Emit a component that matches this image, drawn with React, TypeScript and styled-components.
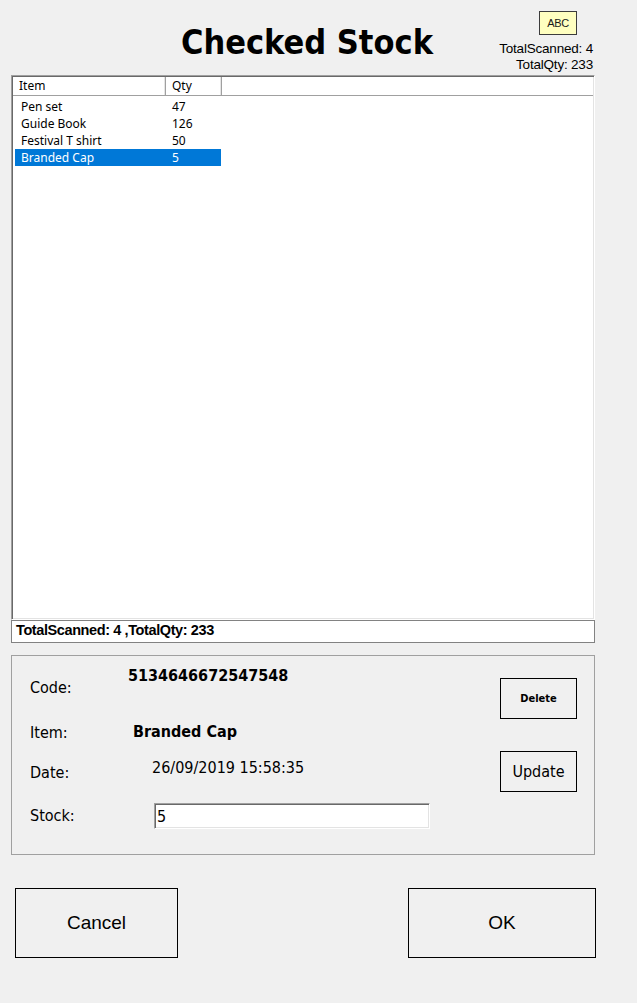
import React from "react";
import styled, { createGlobalStyle } from "styled-components";

const TAHOMA = `"DejaVu Sans Condensed", "Liberation Sans", sans-serif`;
const ARIAL = `"Liberation Sans", Arial, sans-serif`;
const SEGOE = `"Noto Sans", "Open Sans", sans-serif`;

const Global = createGlobalStyle`
  html, body { margin: 0; padding: 0; background: #f0f0f0; }
  body { width: 637px; height: 1003px; overflow: hidden; color: #000; }
  * { box-sizing: border-box; }
`;

const Page = styled.div`
  width: 637px;
  height: 1003px;
  display: flex;
  flex-direction: column;
  background: #f0f0f0;
`;

const Header = styled.header`
  height: 75px;
  display: flex;
  align-items: flex-start;
  padding-left: 181px;
  padding-right: 44px;
`;

const Title = styled.h1`
  margin: 25px 0 0 0;
  font-family: ${TAHOMA};
  font-weight: bold;
  font-size: 34px;
  line-height: 34px;
  color: #000;
  white-space: nowrap;
`;

const Stats = styled.div`
  margin-left: auto;
  padding-top: 11px;
  display: flex;
  flex-direction: column;
  align-items: flex-end;
`;

const Badge = styled.div`
  width: 38px;
  height: 24px;
  margin-right: 16px;
  margin-bottom: 6px;
  background: #ffffc0;
  border: 1px solid #3c3c3c;
  display: flex;
  align-items: center;
  justify-content: center;
  font-family: ${ARIAL};
  font-size: 11px;
  letter-spacing: -0.3px;
  color: #1a1a1a;
`;

const StatLine = styled.div`
  font-family: ${ARIAL};
  font-size: 13.5px;
  letter-spacing: -0.2px;
  line-height: 16px;
  color: #000;
  white-space: nowrap;
`;

const ListBox = styled.div`
  margin: 0 42px 0 11px;
  height: 545px;
  background: #fff;
  border-style: solid;
  border-width: 1px;
  border-color: #a0a0a0 #ffffff #ffffff #a0a0a0;
  box-shadow: inset 1px 1px 0 #696969, inset -1px -1px 0 #e3e3e3;
  padding: 1px;
  display: flex;
  flex-direction: column;
`;

const HeaderRow = styled.div`
  height: 19px;
  display: grid;
  grid-template-columns: 153px 56px 1fr;
  border-bottom: 1px solid #a0a0a0;
  background: #fff;
`;

const HeaderCell = styled.div<{ $last?: boolean }>`
  padding-left: 6px;
  font-family: ${SEGOE};
  font-size: 12px;
  line-height: 18px;
  color: #000;
  border-right: ${(p) => (p.$last ? "none" : "1px solid #a0a0a0")};
  box-shadow: ${(p) => (p.$last ? "none" : "inset -1px 0 0 #e5e5e5")};
`;

const Rows = styled.div`
  padding: 2px 0 0 2px;
  display: flex;
  flex-direction: column;
`;

const Row = styled.div<{ $selected?: boolean }>`
  width: 206px;
  height: 17px;
  display: grid;
  grid-template-columns: 151px 55px;
  background: ${(p) => (p.$selected ? "#0078d7" : "transparent")};
  color: ${(p) => (p.$selected ? "#fff" : "#000")};
`;

const Cell = styled.div`
  padding-left: 6px;
  font-family: ${SEGOE};
  font-size: 12px;
  line-height: 17px;
  white-space: nowrap;
`;

const SummaryStrip = styled.div`
  margin: 0 42px 0 11px;
  height: 23px;
  background: #fff;
  border: 1px solid #828282;
  padding-left: 4px;
  font-family: ${ARIAL};
  font-weight: bold;
  font-size: 14.5px;
  letter-spacing: -0.4px;
  line-height: 18px;
  color: #000;
  white-space: nowrap;
`;

const GroupBox = styled.section`
  margin: 12px 42px 0 11px;
  height: 200px;
  border: 1px solid #a0a0a0;
  display: flex;
`;

const Fields = styled.div`
  flex: 1;
  padding-left: 18px;
  display: flex;
  flex-direction: column;
`;

const Field = styled.div<{ $h?: number }>`
  display: flex;
  align-items: flex-start;
  height: ${(p) => (p.$h ? `${p.$h}px` : "auto")};
`;

const Label = styled.div<{ $top: number }>`
  width: 98px;
  flex-shrink: 0;
  margin-top: ${(p) => p.$top}px;
  font-family: ${TAHOMA};
  font-size: 16px;
  line-height: 20px;
  color: #000;
`;

const Value = styled.div<{ $top: number; $left: number; $bold?: boolean }>`
  margin-top: ${(p) => p.$top}px;
  margin-left: ${(p) => p.$left}px;
  font-family: ${TAHOMA};
  font-weight: ${(p) => (p.$bold ? "bold" : "normal")};
  font-size: 16px;
  line-height: 20px;
  color: #000;
  white-space: nowrap;
`;

const StockInput = styled.input<{ $top: number; $left: number }>`
  margin-top: ${(p) => p.$top}px;
  margin-left: ${(p) => p.$left}px;
  width: 276px;
  height: 26px;
  padding: 0 0 0 2px;
  background: #fff;
  border-style: solid;
  border-width: 1px;
  border-color: #a0a0a0 #ffffff #ffffff #a0a0a0;
  box-shadow: inset 1px 1px 0 #696969, inset -1px -1px 0 #e3e3e3;
  font-family: ${TAHOMA};
  font-size: 16px;
  color: #000;
  outline: none;
`;

const SideButtons = styled.div`
  padding: 22px 17px 0 0;
  display: flex;
  flex-direction: column;
  gap: 32px;
`;

const SmallButton = styled.button<{ $bold?: boolean }>`
  width: 77px;
  height: 41px;
  border: 1px solid #000;
  background: #f0f0f0;
  padding: 0;
  font-family: ${TAHOMA};
  font-weight: ${(p) => (p.$bold ? "bold" : "normal")};
  font-size: ${(p) => (p.$bold ? "11px" : "16px")};
  color: #000;
  cursor: pointer;
`;

const BottomBar = styled.div`
  margin-top: 33px;
  padding: 0 41px 0 15px;
  display: flex;
  justify-content: space-between;
`;

const BigButton = styled.button<{ $w: number }>`
  width: ${(p) => p.$w}px;
  height: 70px;
  border: 1px solid #000;
  background: #f0f0f0;
  padding: 0;
  font-family: ${ARIAL};
  font-size: 19px;
  color: #000;
  cursor: pointer;
`;

type Item = { name: string; qty: number };

const items: Item[] = [
  { name: "Pen set", qty: 47 },
  { name: "Guide Book", qty: 126 },
  { name: "Festival T shirt", qty: 50 },
  { name: "Branded Cap", qty: 5 },
];

const totalScanned = 4;
const totalQty = 233;

export default function App() {
  const selected = 3;
  return (
    <Page>
      <Global />
      <Header>
        <Title>Checked Stock</Title>
        <Stats>
          <Badge>ABC</Badge>
          <StatLine>TotalScanned: {totalScanned}</StatLine>
          <StatLine>TotalQty: {totalQty}</StatLine>
        </Stats>
      </Header>

      <ListBox>
        <HeaderRow>
          <HeaderCell>Item</HeaderCell>
          <HeaderCell>Qty</HeaderCell>
          <HeaderCell $last />
        </HeaderRow>
        <Rows>
          {items.map((it, i) => (
            <Row key={it.name} $selected={i === selected}>
              <Cell>{it.name}</Cell>
              <Cell>{it.qty}</Cell>
            </Row>
          ))}
        </Rows>
      </ListBox>
      <SummaryStrip>
        TotalScanned: {totalScanned} ,TotalQty: {totalQty}
      </SummaryStrip>

      <GroupBox>
        <Fields>
          <Field $h={44}>
            <Label $top={22}>Code:</Label>
            <Value $top={10} $left={0} $bold>
              5134646672547548
            </Value>
          </Field>
          <Field $h={45}>
            <Label $top={23}>Item:</Label>
            <Value $top={22} $left={5} $bold>
              Branded Cap
            </Value>
          </Field>
          <Field $h={48}>
            <Label $top={18}>Date:</Label>
            <Value $top={13} $left={24}>
              26/09/2019 15:58:35
            </Value>
          </Field>
          <Field>
            <Label $top={13}>Stock:</Label>
            <StockInput $top={10} $left={26} defaultValue="5" />
          </Field>
        </Fields>
        <SideButtons>
          <SmallButton $bold>Delete</SmallButton>
          <SmallButton>Update</SmallButton>
        </SideButtons>
      </GroupBox>

      <BottomBar>
        <BigButton $w={163}>Cancel</BigButton>
        <BigButton $w={188}>OK</BigButton>
      </BottomBar>
    </Page>
  );
}
